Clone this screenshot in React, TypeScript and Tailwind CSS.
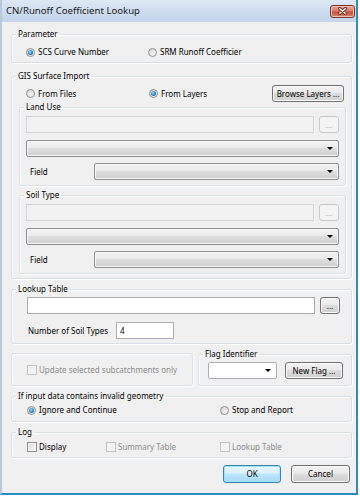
import React from "react";

type Kids = { children?: React.ReactNode; className?: string };

function Group({ label, className = "", body = "", children }: Kids & { label?: string; body?: string }) {
  return (
    <fieldset
      className={`rounded-[3px] border border-[#d5dfe5] shadow-[inset_1px_1px_0_#ffffff,1px_1px_0_#ffffff] ${className}`}
    >
      {label && <legend className="ml-[4px] px-[2px] leading-[10px]">{label}</legend>}
      <div className={body}>{children}</div>
    </fieldset>
  );
}

function Radio({ checked, label, className = "" }: { checked?: boolean; label: string; className?: string }) {
  return (
    <span className={`flex items-center gap-[3px] ${className}`}>
      <span className="flex h-[9px] w-[9px] items-center justify-center rounded-full border border-[#8e8f8f] bg-[linear-gradient(135deg,#d6d6d6,#fbfbfb)]">
        {checked && (
          <span className="h-[5px] w-[5px] rounded-full bg-[radial-gradient(circle_at_40%_40%,#9be0fb,#2a86c4_55%,#0c3f6b)]" />
        )}
      </span>
      {label}
    </span>
  );
}

function Check({ label, disabled, className = "" }: { label: string; disabled?: boolean; className?: string }) {
  return (
    <span className={`flex items-center gap-[2px] ${disabled ? "text-[#8d8d8d]" : ""} ${className}`}>
      <span
        className={`h-[10px] w-[10px] border ${
          disabled
            ? "border-[#c4c4c4] bg-[#f4f4f4]"
            : "border-[#8e8f8f] bg-[linear-gradient(135deg,#dcdcdc,#fbfbfb)] shadow-[inset_0_0_0_1px_#f4f4f4]"
        }`}
      />
      {label}
    </span>
  );
}

function Arrow() {
  return <span className="h-0 w-0 border-x-[3px] border-t-[3px] border-x-transparent border-t-black" />;
}

function Combo({ white, className = "" }: { white?: boolean; className?: string }) {
  return (
    <div
      className={`flex h-[17px] items-center justify-end rounded-[2px] border pr-[5px] ${
        white
          ? "border-[#abadb3] bg-white"
          : "border-[#8f8f8f] bg-[linear-gradient(#f3f3f3,#ebebeb_45%,#dddddd_50%,#d2d2d2)] shadow-[inset_0_0_0_1px_#f8f8f8]"
      } ${className}`}
    >
      <Arrow />
    </div>
  );
}

function Field({ white, className = "", children }: Kids & { white?: boolean }) {
  return (
    <div
      className={`flex h-[17px] items-center border px-[3px] ${
        white ? "border-[#abadb3] bg-white" : "border-[#d5d5d5] bg-[#f2f2f2]"
      } ${className}`}
    >
      {children}
    </div>
  );
}

function Btn({ children, className = "", disabled, primary }: Kids & { disabled?: boolean; primary?: boolean }) {
  const look = disabled
    ? "border-[#c9c9c9] bg-[#f4f4f4] text-[#a0a0a0]"
    : primary
      ? "border-[#3c7fb1] bg-[linear-gradient(#eaf6fd,#d9f0fc_45%,#bee6fd_50%,#a7d9f5)] shadow-[inset_0_0_0_1px_#9ee6fb]"
      : "border-[#707070] bg-[linear-gradient(#f2f2f2,#ebebeb_45%,#dddddd_50%,#cfcfcf)] shadow-[inset_0_0_0_1px_#fcfcfc]";
  return (
    <button
      type="button"
      className={`flex h-[17px] shrink-0 items-center justify-center rounded-[3px] border leading-[10px] ${look} ${className}`}
    >
      {children}
    </button>
  );
}

function SourceGroup({ label, className = "" }: { label: string; className?: string }) {
  return (
    <Group label={label} className={`ml-[7px] mr-[5px] pb-[5px] pt-[4px] ${className}`} body="px-[6px]">
      <div className="flex items-center gap-[5px]">
        <Field className="flex-1" />
        <Btn disabled className="w-[20px]">...</Btn>
      </div>
      <Combo className="mt-[7px]" />
      <div className="mt-[6px] flex items-center">
        <span className="w-[68px] pl-[4px]">Field</span>
        <Combo className="flex-1" />
      </div>
    </Group>
  );
}

function TitleBar() {
  return (
    <div className="flex h-[22px] items-center justify-between bg-[linear-gradient(#dfe9f5,#cfddef_50%,#c4d5ea)] pl-[4px] pr-[1px]">
      <span className="text-[9.6px] leading-[12px] text-[#1b1b1b]">CN/Runoff Coefficient Lookup</span>
      <span className="flex h-[13px] w-[25px] items-center justify-center rounded-[3px] border border-[#7a3328] bg-[linear-gradient(#eaa99b,#d77b66_45%,#c5503b_55%,#d7866f)] shadow-[inset_0_0_0_1px_#f2c1b5]">
        <svg width="9" height="8" viewBox="0 0 9 8">
          <path d="M1.5 1.5L7.5 6.5M7.5 1.5L1.5 6.5" stroke="#5b1d12" strokeWidth="3" strokeLinecap="round" />
          <path d="M1.5 1.5L7.5 6.5M7.5 1.5L1.5 6.5" stroke="#ffffff" strokeWidth="1.5" strokeLinecap="round" />
        </svg>
      </span>
    </div>
  );
}

export default function App() {
  return (
    <div className="h-[496px] w-[360px] bg-white pb-[1px] pr-[2px] font-['Noto_Sans',sans-serif] text-[8px] leading-[10px] text-black">
      <div className="flex h-full flex-col border-b-2 border-l-2 border-r-2 border-b-[#2a8cc1] border-l-[#b8c9dc] border-r-[#2a8cc1]">
        <TitleBar />
        <div className="flex-1 bg-[#f0f0f0] pl-[9px] pr-[4px]">
          {/* Parameter */}
          <Group label="Parameter" className="mt-[7px] pb-[4px] pt-[7px]" body="pl-[14px]">
            <div className="flex h-[12px] items-center">
              <Radio checked label="SCS Curve Number" className="w-[122px]" />
              <Radio label="SRM Runoff Coefficier" />
            </div>
          </Group>

          {/* GIS import */}
          <Group label="GIS Surface Import" className="mt-[8px] pb-[4px] pt-[4px]">
            <div className="flex h-[17px] items-center pl-[14px] pr-[7px]">
              <Radio label="From Files" className="w-[123px]" />
              <Radio checked label="From Layers" />
              <Btn className="ml-auto w-[72px]">Browse Layers ...</Btn>
            </div>
            <SourceGroup label="Land Use" />
            <SourceGroup label="Soil Type" className="mt-[4px]" />
          </Group>

          {/* Lookup table */}
          <Group label="Lookup Table" className="mt-[5px] pb-[4px] pt-[3px]" body="pl-[15px] pr-[11px]">
            <div className="flex items-center gap-[5px]">
              <Field white className="flex-1" />
              <Btn className="w-[20px]">...</Btn>
            </div>
            <div className="mt-[8px] flex items-center">
              <span className="w-[89px] pl-[1px]">Number of Soil Types</span>
              <Field white className="w-[58px]">4</Field>
            </div>
          </Group>

          {/* Update / flag */}
          <div className="mt-[5px] flex items-end gap-[5px]">
            <div className="flex h-[33px] w-[182px] items-center rounded-[3px] border border-[#d5dfe5] pl-[15px] shadow-[inset_1px_1px_0_#ffffff,1px_1px_0_#ffffff]">
              <Check disabled label="Update selected subcatchments only" />
            </div>
            <Group label="Flag Identifier" className="flex-1 pb-[6px] pt-[3px]" body="pl-[9px] pr-[8px]">
              <div className="flex items-center gap-[8px]">
                <Combo white className="w-[69px]" />
                <Btn className="flex-1">New Flag ...</Btn>
              </div>
            </Group>
          </div>

          {/* Invalid geometry */}
          <Group label="If input data contains invalid geometry" className="mt-[5px] pb-[5px] pt-[3px]" body="pl-[15px]">
            <div className="flex h-[12px] items-center">
              <Radio checked label="Ignore and Continue" className="w-[193px]" />
              <Radio label="Stop and Report" />
            </div>
          </Group>

          {/* Log */}
          <Group label="Log" className="mt-[5px] pb-[4px] pt-[4px]" body="pl-[15px]">
            <div className="flex h-[12px] items-center">
              <Check label="Display" className="w-[79px]" />
              <Check disabled label="Summary Table" className="w-[114px]" />
              <Check disabled label="Lookup Table" />
            </div>
          </Group>

          {/* Buttons */}
          <div className="mr-[2px] mt-[7px] flex justify-end gap-[10px]">
            <Btn primary className="h-[18px] w-[58px]">OK</Btn>
            <Btn className="h-[18px] w-[59px]">Cancel</Btn>
          </div>
        </div>
      </div>
    </div>
  );
}
